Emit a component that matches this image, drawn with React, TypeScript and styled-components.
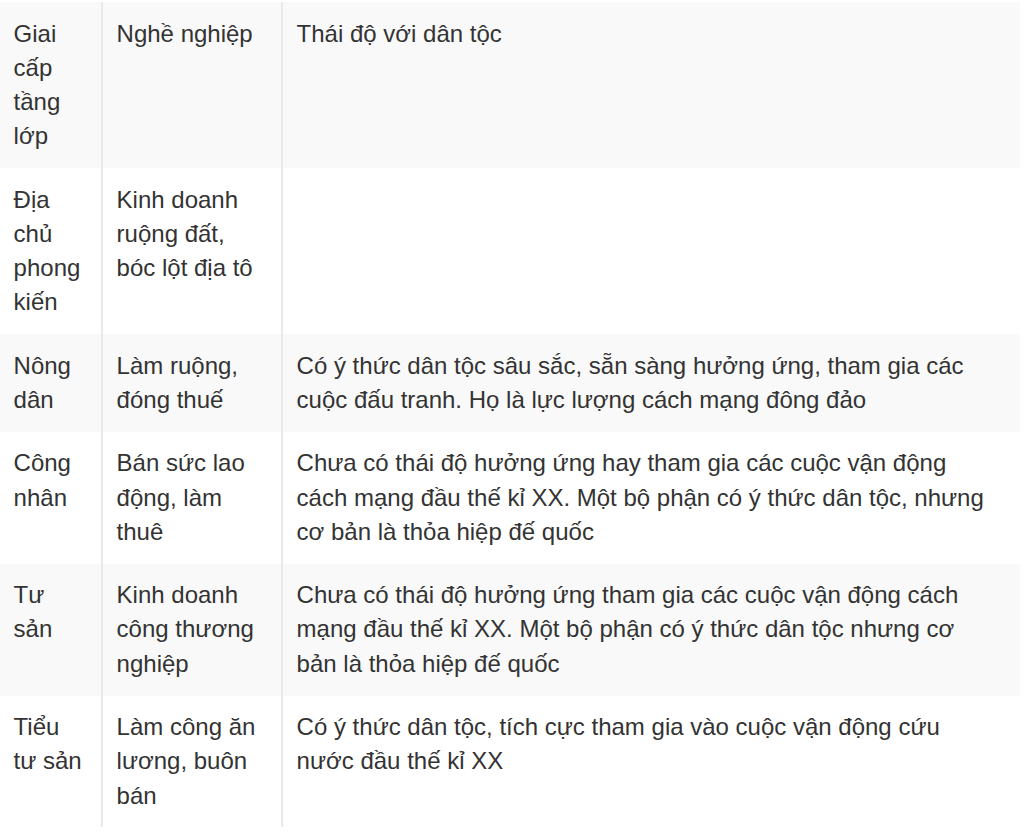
import React from "react";
import styled, { createGlobalStyle } from "styled-components";

const Global = createGlobalStyle`
  * { box-sizing: border-box; }
  html, body { margin: 0; padding: 0; background: #ffffff; }
  body {
    font-family: "Liberation Sans", Arial, sans-serif;
    color: #333333;
  }
`;

const Page = styled.div`
  padding-top: 2px;
  width: 1024px;
`;

const Table = styled.table`
  width: 1020px;
  table-layout: fixed;
  border-collapse: separate;
  border-spacing: 0;
  font-size: 24px;
  line-height: 1.42857;
`;

const Row = styled.tr<{ $striped: boolean }>`
  background: ${(p) => (p.$striped ? "#f9f9f9" : "#ffffff")};
`;

const Cell = styled.td<{ $w?: number; $first?: boolean; $wide?: boolean }>`
  ${(p) => (p.$w ? `width: ${p.$w}px;` : "")}
  vertical-align: top;
  padding: 14.5px ${(p) => (p.$wide ? "25px" : "13px")} 14.5px 13.6px;
  border-left: ${(p) => (p.$first ? "none" : "2px solid #e9e9e9")};
  font-weight: normal;
  text-align: left;
  color: #333333;
`;

const rows: [string, string, string][] = [
  ["Giai cấp tầng lớp", "Nghề nghiệp", "Thái độ với dân tộc"],
  ["Địa chủ phong kiến", "Kinh doanh ruộng đất, bóc lột địa tô", ""],
  [
    "Nông dân",
    "Làm ruộng, đóng thuế",
    "Có ý thức dân tộc sâu sắc, sẵn sàng hưởng ứng, tham gia các cuộc đấu tranh. Họ là lực lượng cách mạng đông đảo",
  ],
  [
    "Công nhân",
    "Bán sức lao động, làm thuê",
    "Chưa có thái độ hưởng ứng hay tham gia các cuộc vận động cách mạng đầu thế kỉ XX. Một bộ phận có ý thức dân tộc, nhưng cơ bản là thỏa hiệp đế quốc",
  ],
  [
    "Tư sản",
    "Kinh doanh công thương nghiệp",
    "Chưa có thái độ hưởng ứng tham gia các cuộc vận động cách mạng đầu thế kỉ XX. Một bộ phận có ý thức dân tộc nhưng cơ bản là thỏa hiệp đế quốc",
  ],
  [
    "Tiểu tư sản",
    "Làm công ăn lương, buôn bán",
    "Có ý thức dân tộc, tích cực tham gia vào cuộc vận động cứu nước đầu thế kỉ XX",
  ],
];

export default function App() {
  return (
    <>
      <Global />
      <Page>
        <Table>
          <tbody>
            {rows.map((r, i) => (
              <Row key={i} $striped={i % 2 === 0}>
                <Cell $first $w={i === 0 ? 101 : undefined}>{r[0]}</Cell>
                <Cell $w={i === 0 ? 180 : undefined}>{r[1]}</Cell>
                <Cell $wide>{r[2]}</Cell>
              </Row>
            ))}
          </tbody>
        </Table>
      </Page>
    </>
  );
}
